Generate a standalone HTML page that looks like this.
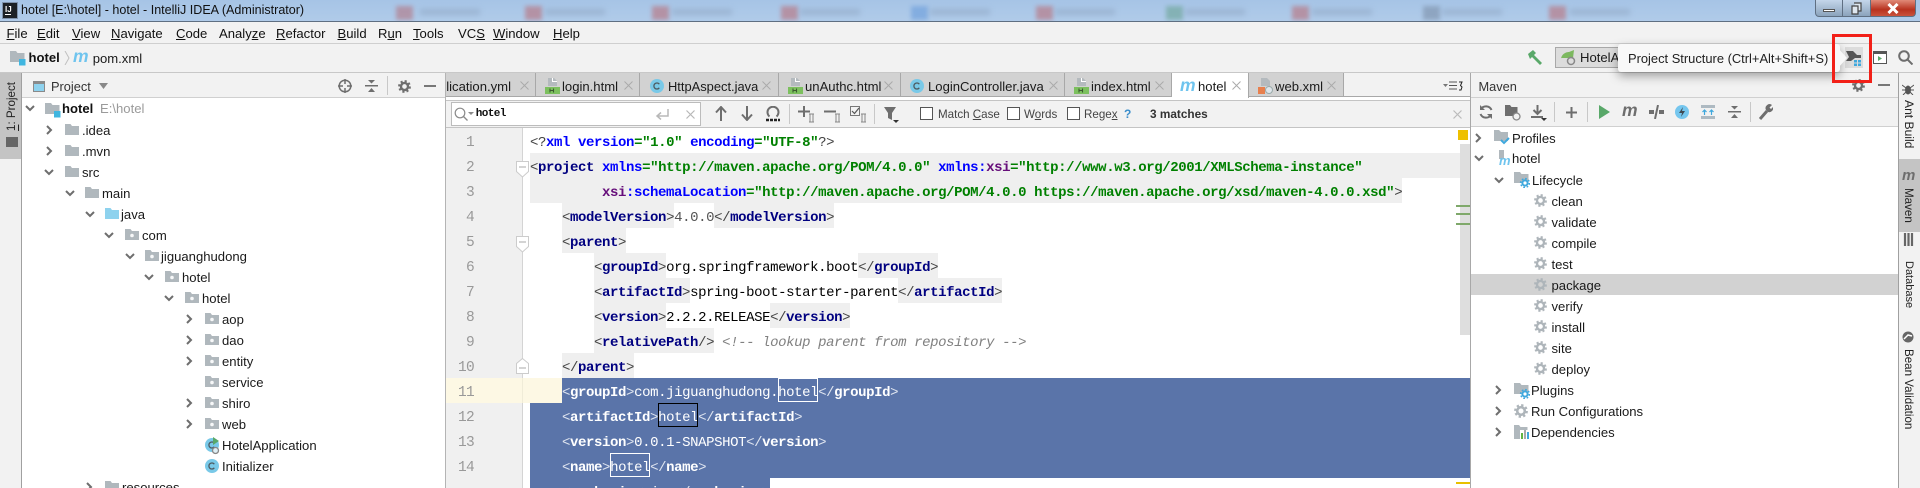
<!DOCTYPE html>
<html><head><meta charset="utf-8"><title>hotel</title>
<style>
html,body{margin:0;padding:0;background:#fff}
#r{position:relative;width:1920px;height:488px;overflow:hidden;background:#fff;font-family:"Liberation Sans",sans-serif;font-size:13.1px;color:#1a1a1a}
#r div,#r svg{position:absolute}
.t{white-space:pre;line-height:21px;height:21px}
.b{background:#f2f2f2}
.tab{top:73px;height:23px;background:#d2d2d2;border-right:1px solid #a8a8a8}
.l{left:530px;height:25px;line-height:30px;white-space:pre;font-family:"Liberation Mono",monospace;font-size:14px;letter-spacing:-.4px;color:#000;width:930px}
.l span{display:inline-block;height:25px;vertical-align:top}
.g{background:#efefef}
.n{color:#000080;font-weight:bold}
.a{color:#0000ff;font-weight:bold}
.p{color:#660e7a;font-weight:bold}
.s{color:#008000;font-weight:bold}
.o{color:#444;font-weight:normal}
.c{color:#808080;font-style:italic}
.w{color:#fff}
.w b{font-weight:bold}
.w i{font-style:normal;color:#dfe5f0}
.ln{left:445px;width:29px;text-align:right;height:25px;line-height:30px;font-family:"Liberation Mono",monospace;font-size:14.5px;letter-spacing:-.7px;color:#999}
.m{font-weight:bold;font-style:italic;color:#6fc4ee;font-family:"Liberation Sans",sans-serif;font-size:17.5px;line-height:21px;height:21px}
.v{writing-mode:vertical-rl;white-space:pre;line-height:21px;width:21px;font-size:11.6px;color:#222}
.mk{width:40px;height:24px;box-sizing:border-box;border:1px solid #fff;top:0}
.sep{width:1px;background:#c8c8c8}
.blur{filter:blur(2px);top:6px;height:14px;width:17px;background:#b87682;opacity:.65}
.fl{font-size:11.6px;color:#444}
</style></head><body><div id="r">
<svg width="0" height="0" style="left:0;top:0"><defs>
<symbol id="f" viewBox="0 0 14 11"><path d="M0 0h5.500l1.500 2h7v9H0z" fill="#b0b8bd"/></symbol>
<symbol id="fj" viewBox="0 0 14 11"><path d="M0 0h5.500l1.500 2h7v9H0z" fill="#8ed2ee"/></symbol>
<symbol id="p" viewBox="0 0 14 11"><path d="M0 0h5.500l1.500 2h7v9H0z" fill="#b0b8bd"/><circle cx="7" cy="6.500" r="1.800" fill="#fff" fill-opacity=".9"/></symbol>
<symbol id="cd" viewBox="0 0 10 10"><path d="M1 3l4 4 4-4" fill="none" stroke="#6e6e6e" stroke-width="2"/></symbol>
<symbol id="cr" viewBox="0 0 10 10"><path d="M3 1l4 4-4 4" fill="none" stroke="#6e6e6e" stroke-width="2"/></symbol>
<symbol id="root" viewBox="0 0 16 15"><path d="M0 0h6l1.500 2h7v9H0z" fill="#b0b8bd"/><path d="M9 8h6.500v6.500H9z" fill="#40b6e0"/></symbol>
<symbol id="cl" viewBox="0 0 14 14"><circle cx="7" cy="7" r="7" fill="#79c9e8"/><path d="M9.300 5.200A3 3 0 1 0 9.300 8.800" fill="none" stroke="#4d5a60" stroke-width="1.300"/></symbol>
<symbol id="html" viewBox="0 0 15 16"><path d="M3 0h6l3 3v5H3z" fill="#b4babe"/><path d="M7.500 0v3.500H12" fill="none" stroke="#fff"/><path d="M0 9h15v7H0z" fill="#7cc05e"/><path d="M5 10.500v4M8.500 10.500v4M5 12.500h3.500" stroke="#3c5a30" stroke-width="1.100" fill="none"/></symbol>
<symbol id="gear" viewBox="0 0 14 14"><circle cx="7" cy="7" r="3.800" fill="none" stroke="#aeb5ba" stroke-width="2.600"/><circle cx="7" cy="7" r="5.800" fill="none" stroke="#aeb5ba" stroke-width="2.200" stroke-dasharray="2.300 2.250"/></symbol>
<symbol id="gd" viewBox="0 0 14 14"><circle cx="7" cy="7" r="3.800" fill="none" stroke="#6e6e6e" stroke-width="2.600"/><circle cx="7" cy="7" r="5.800" fill="none" stroke="#6e6e6e" stroke-width="2.200" stroke-dasharray="2.300 2.250"/></symbol>
<symbol id="lf" viewBox="0 0 16 16"><path d="M0 0h6l1.500 2h7v9H0z" fill="#b0b8bd"/><circle cx="11" cy="11" r="2.600" fill="#fff" stroke="#3fa8dd" stroke-width="2"/><circle cx="11" cy="11" r="4.400" fill="none" stroke="#3fa8dd" stroke-width="1.500" stroke-dasharray="1.700 1.750"/></symbol>
</defs></svg>

<!-- title bar -->
<div style="left:0;top:0;width:1920px;height:21px;background:linear-gradient(#a6c4e6,#b0cbe9)"></div>
<div class="blur" style="left:396px;background:#b27b89"></div><div class="blur" style="left:525px"></div><div class="blur" style="left:652px"></div><div class="blur" style="left:781px"></div><div class="blur" style="left:911px;background:#6e9fdc"></div><div class="blur" style="left:1036px"></div><div class="blur" style="left:1166px;background:#6fa69a"></div><div class="blur" style="left:1292px"></div><div class="blur" style="left:1423px;background:#7f93ad"></div><div class="blur" style="left:1549px"></div>
<div style="left:420px;top:9px;width:60px;height:6px;background:#8fa7c4;filter:blur(3px);opacity:.6"></div><div style="left:545px;top:9px;width:60px;height:6px;background:#8fa7c4;filter:blur(3px);opacity:.6"></div><div style="left:672px;top:9px;width:60px;height:6px;background:#8fa7c4;filter:blur(3px);opacity:.6"></div><div style="left:800px;top:9px;width:60px;height:6px;background:#8fa7c4;filter:blur(3px);opacity:.6"></div><div style="left:930px;top:9px;width:60px;height:6px;background:#8fa7c4;filter:blur(3px);opacity:.6"></div><div style="left:1055px;top:9px;width:60px;height:6px;background:#8fa7c4;filter:blur(3px);opacity:.6"></div><div style="left:1185px;top:9px;width:60px;height:6px;background:#8fa7c4;filter:blur(3px);opacity:.6"></div><div style="left:1312px;top:9px;width:60px;height:6px;background:#8fa7c4;filter:blur(3px);opacity:.6"></div><div style="left:1442px;top:9px;width:60px;height:6px;background:#8fa7c4;filter:blur(3px);opacity:.6"></div><div style="left:1570px;top:9px;width:60px;height:6px;background:#8fa7c4;filter:blur(3px);opacity:.6"></div>
<div style="left:2px;top:2px;width:14px;height:15px;background:#1c2126;border:1px solid #7f93ad"></div>
<div class="t" style="left:5px;top:-1px;color:#fff;font-size:8px;font-weight:bold">IJ</div>
<div style="left:5px;top:14px;width:6px;height:1px;background:#fff"></div>
<div class="t" style="left:21px;top:0;color:#111;font-size:12.55px">hotel [E:\hotel] - hotel - IntelliJ IDEA (Administrator)</div>
<div style="left:0;top:21px;width:1920px;height:1px;background:#5f6f82"></div>
<!-- window buttons -->
<div style="left:1815px;top:0;width:28px;height:17px;background:linear-gradient(#c4d6ea,#8ba3bc);border:1px solid #5f6f82;border-top:0;box-sizing:border-box;border-radius:0 0 0 4px"></div>
<div style="left:1823px;top:9px;width:12px;height:3px;background:#fff;border:1px solid #555;box-sizing:border-box"></div>
<div style="left:1843px;top:0;width:27px;height:17px;background:linear-gradient(#c4d6ea,#8ba3bc);border-bottom:1px solid #5f6f82;box-sizing:border-box"></div>
<svg style="left:1850px;top:2px" width="13" height="13" viewBox="0 0 13 13"><path d="M4 1h7v8H8M2 4h6v8H2z" fill="#dfe7ef" stroke="#444" stroke-width="1.200"/></svg>
<div style="left:1870px;top:0;width:46px;height:17px;background:linear-gradient(#e08a78,#b8321f 60%,#c9523c);border:1px solid #5f6f82;border-top:0;box-sizing:border-box;border-radius:0 0 4px 0"></div>
<svg style="left:1887px;top:3px" width="12" height="11" viewBox="0 0 12 11"><path d="M1.500 1l9 9M10.500 1l-9 9" stroke="#fff" stroke-width="3"/></svg>

<!-- menu -->
<div class="b" style="left:0;top:22px;width:1920px;height:21px"></div>
<div style="left:0;top:43px;width:1920px;height:1px;background:#cfcfcf"></div>
<div class="t" style="left:6.500px;top:22.500px;color:#111"><u>F</u>ile</div>
<div class="t" style="left:37px;top:22.500px;color:#111"><u>E</u>dit</div>
<div class="t" style="left:72px;top:22.500px;color:#111"><u>V</u>iew</div>
<div class="t" style="left:111px;top:22.500px;color:#111"><u>N</u>avigate</div>
<div class="t" style="left:176px;top:22.500px;color:#111"><u>C</u>ode</div>
<div class="t" style="left:219px;top:22.500px;color:#111">Analy<u>z</u>e</div>
<div class="t" style="left:276px;top:22.500px;color:#111"><u>R</u>efactor</div>
<div class="t" style="left:337.500px;top:22.500px;color:#111"><u>B</u>uild</div>
<div class="t" style="left:378px;top:22.500px;color:#111">R<u>u</u>n</div>
<div class="t" style="left:413px;top:22.500px;color:#111"><u>T</u>ools</div>
<div class="t" style="left:458px;top:22.500px;color:#111">VC<u>S</u></div>
<div class="t" style="left:493px;top:22.500px;color:#111"><u>W</u>indow</div>
<div class="t" style="left:553px;top:22.500px;color:#111"><u>H</u>elp</div>

<!-- nav bar -->
<div class="b" style="left:0;top:44px;width:1920px;height:28px"></div>
<div style="left:0;top:72px;width:1920px;height:1px;background:#c8c8c8"></div>
<svg style="left:10px;top:51px" width="16" height="15"><use href="#root"/></svg>
<div class="t" style="left:28.500px;top:47px;font-weight:bold;color:#111">hotel</div>
<svg style="left:64px;top:51px" width="6" height="14" viewBox="0 0 6 14"><path d="M1 0l4 7-4 7" fill="none" stroke="#c0c0c0"/></svg>
<div class="m" style="left:73px;top:46px">m</div>
<div class="t" style="left:92.700px;top:47.500px">pom.xml</div>
<svg style="left:1526px;top:49px" width="18" height="18" viewBox="0 0 18 18"><path d="M2 5l5-4 3 3-2 2 8 8-2 2-8-8-2 2z" fill="#59a869"/></svg>
<div style="left:1555px;top:47px;width:70px;height:21px;background:#dcdcdc;border:1px solid #a8a8a8;box-sizing:border-box"></div>
<svg style="left:1560px;top:49px" width="16" height="17" viewBox="0 0 16 17"><path d="M1 11C1 5 6 3 9 3l5-2-1 8H1z" fill="#7cb85f"/><circle cx="11" cy="12" r="3.500" fill="#dcdcdc" stroke="#888" stroke-width="1.500"/></svg>
<div class="t" style="left:1580px;top:47px">HotelA</div>

<!-- left strip -->
<div class="b" style="left:0;top:73px;width:21px;height:415px"></div>
<div style="left:0;top:73px;width:21px;height:86px;background:#c4c4c4"></div>
<div style="left:21px;top:73px;width:1px;height:415px;background:#a0a0a0"></div>
<div class="v" style="left:1px;top:82px;transform:rotate(180deg)"><u>1</u>: Project</div>
<svg style="left:6px;top:137px" width="12" height="10"><rect width="12" height="10" fill="#666"/></svg>

<!-- project header -->
<div class="b" style="left:22px;top:73px;width:423px;height:24px"></div>
<div style="left:22px;top:97px;width:423px;height:1px;background:#d0d0d0"></div>
<div style="left:33px;top:81px;width:12px;height:11px;background:#8ed2ee;border:1px solid #8a8a8a;border-top-width:3px;box-sizing:border-box"></div>
<div class="t" style="left:51px;top:75.500px;color:#333;font-size:12.8px">Project</div>
<svg style="left:99px;top:83px" width="9" height="6"><path d="M0 0h9L4.500 6z" fill="#888"/></svg>
<svg style="left:338px;top:79px" width="14" height="14" viewBox="0 0 14 14"><circle cx="7" cy="7" r="5.800" fill="none" stroke="#6e6e6e" stroke-width="1.500"/><path d="M7 0v5M7 9v5M0 7h5M9 7h5" stroke="#6e6e6e" stroke-width="1.500"/></svg>
<svg style="left:365px;top:79px" width="13" height="14" viewBox="0 0 13 14"><path d="M0 6h13v1.500H0zM3 1l3.500 3.500L10 1zM3 13l3.500-4 3.500 4z" fill="#6e6e6e"/></svg>
<div class="sep" style="left:387px;top:76px;height:19px"></div>
<svg style="left:398px;top:80px" width="13" height="13"><use href="#gd"/></svg>
<div style="left:424px;top:85px;width:12px;height:2px;background:#777"></div>

<!-- project tree -->
<svg style="left:25px;top:103px" width="10" height="10"><use href="#cd"/></svg>
<svg style="left:45px;top:103px" width="16" height="15"><use href="#root"/></svg>
<div class="t" style="left:62px;top:98px;font-weight:bold;color:#111">hotel</div><div class="t" style="left:100px;top:98px;color:#9a9a9a">E:\hotel</div>
<svg style="left:44px;top:125px" width="10" height="10"><use href="#cr"/></svg><svg style="left:65px;top:124px" width="14" height="11"><use href="#f"/></svg><div class="t" style="left:82px;top:119.500px">.idea</div>
<svg style="left:44px;top:146px" width="10" height="10"><use href="#cr"/></svg><svg style="left:65px;top:145px" width="14" height="11"><use href="#f"/></svg><div class="t" style="left:82px;top:140.500px">.mvn</div>
<svg style="left:44px;top:167px" width="10" height="10"><use href="#cd"/></svg><svg style="left:65px;top:166px" width="14" height="11"><use href="#f"/></svg><div class="t" style="left:82px;top:161.500px">src</div>
<svg style="left:65px;top:188px" width="10" height="10"><use href="#cd"/></svg><svg style="left:85px;top:187px" width="14" height="11"><use href="#f"/></svg><div class="t" style="left:102px;top:182.500px">main</div>
<svg style="left:85px;top:209px" width="10" height="10"><use href="#cd"/></svg><svg style="left:105px;top:208px" width="14" height="11"><use href="#fj"/></svg><div class="t" style="left:121px;top:203.500px">java</div>
<svg style="left:104px;top:230px" width="10" height="10"><use href="#cd"/></svg><svg style="left:125px;top:229px" width="14" height="11"><use href="#p"/></svg><div class="t" style="left:142px;top:224.500px">com</div>
<svg style="left:125px;top:251px" width="10" height="10"><use href="#cd"/></svg><svg style="left:145px;top:250px" width="14" height="11"><use href="#p"/></svg><div class="t" style="left:161px;top:245.500px">jiguanghudong</div>
<svg style="left:144px;top:272px" width="10" height="10"><use href="#cd"/></svg><svg style="left:165px;top:271px" width="14" height="11"><use href="#p"/></svg><div class="t" style="left:182px;top:266.500px">hotel</div>
<svg style="left:164px;top:293px" width="10" height="10"><use href="#cd"/></svg><svg style="left:185px;top:292px" width="14" height="11"><use href="#p"/></svg><div class="t" style="left:202px;top:287.500px">hotel</div>
<svg style="left:184px;top:314px" width="10" height="10"><use href="#cr"/></svg><svg style="left:205px;top:313px" width="14" height="11"><use href="#p"/></svg><div class="t" style="left:222px;top:308.500px">aop</div>
<svg style="left:184px;top:335px" width="10" height="10"><use href="#cr"/></svg><svg style="left:205px;top:334px" width="14" height="11"><use href="#p"/></svg><div class="t" style="left:222px;top:329.500px">dao</div>
<svg style="left:184px;top:356px" width="10" height="10"><use href="#cr"/></svg><svg style="left:205px;top:355px" width="14" height="11"><use href="#p"/></svg><div class="t" style="left:222px;top:350.500px">entity</div>
<svg style="left:205px;top:376px" width="14" height="11"><use href="#p"/></svg><div class="t" style="left:222px;top:371.500px">service</div>
<svg style="left:184px;top:398px" width="10" height="10"><use href="#cr"/></svg><svg style="left:205px;top:397px" width="14" height="11"><use href="#p"/></svg><div class="t" style="left:222px;top:392.500px">shiro</div>
<svg style="left:184px;top:419px" width="10" height="10"><use href="#cr"/></svg><svg style="left:205px;top:418px" width="14" height="11"><use href="#p"/></svg><div class="t" style="left:222px;top:413.500px">web</div>
<svg style="left:205px;top:438px" width="14" height="14"><use href="#cl"/></svg><svg style="left:212px;top:437px" width="9" height="9" viewBox="0 0 9 9"><path d="M1 0l6 4-6 4z" fill="#59a869"/></svg><svg style="left:211px;top:446px" width="9" height="9" viewBox="0 0 9 9"><circle cx="4.500" cy="4.500" r="3" fill="#dfeff5" stroke="#888" stroke-width="1.300"/></svg><div class="t" style="left:222px;top:434.500px">HotelApplication</div>
<svg style="left:205px;top:459px" width="14" height="14"><use href="#cl"/></svg><div class="t" style="left:222px;top:455.500px">Initializer</div>
<svg style="left:84px;top:482px" width="10" height="10"><use href="#cr"/></svg><svg style="left:105px;top:481px" width="14" height="11"><use href="#f"/></svg><div class="t" style="left:122px;top:476.500px">resources</div>
<div style="left:445px;top:73px;width:1px;height:415px;background:#b4b4b4"></div>

<!-- tabs -->
<div class="b" style="left:446px;top:73px;width:1024px;height:24px"></div>
<div class="tab" style="left:446px;width:89px"></div>
<div class="tab" style="left:536px;width:103px"></div>
<div class="tab" style="left:640px;width:138px"></div>
<div class="tab" style="left:779px;width:121px"></div>
<div class="tab" style="left:901px;width:163px"></div>
<div class="tab" style="left:1065px;width:106px"></div>
<div style="left:1172px;top:73px;width:76px;height:25px;background:#fff;border-right:1px solid #a8a8a8"></div>
<div class="tab" style="left:1249px;width:94px"></div>
<div style="left:446px;top:96px;width:726px;height:1px;background:#a8a8a8"></div>
<div style="left:1249px;top:96px;width:221px;height:1px;background:#a8a8a8"></div>
<div style="left:446px;top:100px;width:1024px;height:1px;background:#c4c4c4"></div>
<div class="t" style="left:446px;top:75.500px;width:65px;overflow:hidden;direction:rtl">application.yml</div>
<svg style="left:520px;top:81px" width="9" height="9"><path d="M.5.500l8 8M8.500.500l-8 8" stroke="#aaa"/></svg>
<svg style="left:545px;top:78px" width="15" height="16"><use href="#html"/></svg><div class="t" style="left:562px;top:75.500px">login.html</div>
<svg style="left:624px;top:81px" width="9" height="9"><path d="M.5.500l8 8M8.500.500l-8 8" stroke="#aaa"/></svg>
<svg style="left:650px;top:79px" width="14" height="14"><use href="#cl"/></svg><div class="t" style="left:668px;top:75.500px;font-size:12.9px">HttpAspect.java</div>
<svg style="left:762px;top:81px" width="9" height="9"><path d="M.5.500l8 8M8.500.500l-8 8" stroke="#aaa"/></svg>
<svg style="left:788px;top:78px" width="15" height="16"><use href="#html"/></svg><div class="t" style="left:805px;top:75.500px">unAuthc.html</div>
<svg style="left:884px;top:81px" width="9" height="9"><path d="M.5.500l8 8M8.500.500l-8 8" stroke="#aaa"/></svg>
<svg style="left:910px;top:79px" width="14" height="14"><use href="#cl"/></svg><div class="t" style="left:928px;top:75.500px">LoginController.java</div>
<svg style="left:1049px;top:81px" width="9" height="9"><path d="M.5.500l8 8M8.500.500l-8 8" stroke="#aaa"/></svg>
<svg style="left:1074px;top:78px" width="15" height="16"><use href="#html"/></svg><div class="t" style="left:1091px;top:75.500px">index.html</div>
<svg style="left:1155px;top:81px" width="9" height="9"><path d="M.5.500l8 8M8.500.500l-8 8" stroke="#aaa"/></svg>
<div class="m" style="left:1180px;top:75px">m</div><div class="t" style="left:1198px;top:75.500px">hotel</div>
<svg style="left:1232px;top:81px" width="9" height="9"><path d="M.5.500l8 8M8.500.500l-8 8" stroke="#aaa"/></svg>
<svg style="left:1258px;top:78px" width="15" height="16" viewBox="0 0 15 16"><path d="M3 0h6l3 3v5H3z" fill="#b4babe"/><path d="M0 9h7v7H0z" fill="#e8804e"/><circle cx="11" cy="12" r="3.500" fill="#dfe5ea" stroke="#9aa" /></svg><div class="t" style="left:1275px;top:75.500px">web.xml</div>
<svg style="left:1327px;top:81px" width="9" height="9"><path d="M.5.500l8 8M8.500.500l-8 8" stroke="#aaa"/></svg>
<svg style="left:1443px;top:81px" width="20" height="10" viewBox="0 0 20 10"><path d="M0 3h5L2.500 6z" fill="#777"/><path d="M6 1h8M6 4.500h8M6 8h8" stroke="#555"/><path d="M16 1h3l-1.500 3.500 1.500 1.500-1 3h-2" fill="none" stroke="#222"/></svg>

<!-- find bar -->
<div class="b" style="left:446px;top:101px;width:1024px;height:26px"></div>
<div style="left:446px;top:127px;width:1024px;height:1px;background:#c4c4c4"></div>
<div style="left:451px;top:102px;width:250px;height:24px;background:#fff;border:1px solid #bcbcbc;box-sizing:border-box"></div>
<svg style="left:454px;top:107px" width="20" height="15" viewBox="0 0 20 15"><circle cx="6" cy="6" r="4.800" fill="none" stroke="#8a8a8a" stroke-width="1.200"/><path d="M9.500 9.500l4 4" stroke="#8a8a8a" stroke-width="1.300"/><path d="M14 5h6l-3 3z" fill="#8a8a8a"/></svg>
<div class="t" style="left:475.700px;top:103.500px;font-family:'Liberation Mono',monospace;font-size:11px;letter-spacing:-.6px;font-weight:bold;color:#111">hotel</div>
<svg style="left:655px;top:109px" width="14" height="11" viewBox="0 0 14 11"><path d="M13 0v7H3M6 3.500L2 7l4 3.500" fill="none" stroke="#b8b8b8" stroke-width="1.500"/></svg>
<svg style="left:686px;top:110px" width="9" height="9"><path d="M.5.500l8 8M8.500.500l-8 8" stroke="#b8b8b8" stroke-width="1.200"/></svg>
<svg style="left:715px;top:106px" width="12" height="15" viewBox="0 0 12 15"><path d="M6 15V1M1 6.500L6 1l5 5.500" fill="none" stroke="#6e6e6e" stroke-width="2"/></svg>
<svg style="left:741px;top:106px" width="12" height="15" viewBox="0 0 12 15"><path d="M6 0v14M1 8.500L6 14l5-5.500" fill="none" stroke="#6e6e6e" stroke-width="2"/></svg>
<svg style="left:765px;top:106px" width="16" height="16" viewBox="0 0 16 16"><path d="M4.500 10.500A5.500 5.500 0 1 1 11.500 10.500" fill="none" stroke="#6e6e6e" stroke-width="2"/><path d="M1 14h14" stroke="#222" stroke-width="2.500" stroke-dasharray="3 1"/></svg>
<div class="sep" style="left:789px;top:104px;height:20px"></div>
<svg style="left:798px;top:106px" width="18" height="17" viewBox="0 0 18 17"><path d="M6 0v11M0 5.500h12" stroke="#6e6e6e" stroke-width="2" fill="none"/><path d="M12 8v8M15 8v8M11 8h5M11 16h5" stroke="#888" fill="none"/></svg>
<svg style="left:824px;top:106px" width="18" height="17" viewBox="0 0 18 17"><path d="M0 5.500h12" stroke="#6e6e6e" stroke-width="2" fill="none"/><path d="M12 8v8M15 8v8M11 8h5M11 16h5" stroke="#888" fill="none"/></svg>
<svg style="left:850px;top:106px" width="18" height="17" viewBox="0 0 18 17"><path d="M.5.500h9v9h-9z" fill="none" stroke="#777"/><path d="M2 5l2.500 2.500L9 2" fill="none" stroke="#555" stroke-width="1.200"/><path d="M12 8v8M15 8v8M11 8h5M11 16h5" stroke="#888" fill="none"/></svg>
<div class="sep" style="left:874px;top:104px;height:20px"></div>
<svg style="left:884px;top:107px" width="15" height="17" viewBox="0 0 15 17"><path d="M0 0h12L8 6v7L4 11V6z" fill="#6e6e6e"/><path d="M9 13h6l-3 3z" fill="#333"/></svg>
<div style="left:920px;top:107px;width:13px;height:13px;background:#fff;border:1px solid #555;box-sizing:border-box"></div>
<div class="t fl" style="left:938px;top:103.500px">Match <u>C</u>ase</div>
<div style="left:1007px;top:107px;width:13px;height:13px;background:#fff;border:1px solid #555;box-sizing:border-box"></div>
<div class="t fl" style="left:1024px;top:103.500px">W<u>o</u>rds</div>
<div style="left:1067px;top:107px;width:13px;height:13px;background:#fff;border:1px solid #555;box-sizing:border-box"></div>
<div class="t fl" style="left:1084px;top:103.500px">Rege<u>x</u></div>
<div class="t" style="left:1124px;top:103.500px;color:#3b8ecb;font-weight:bold;font-size:12px">?</div>
<div class="t" style="left:1150px;top:104px;color:#333;font-weight:bold;font-size:11.8px">3 matches</div>
<svg style="left:1453px;top:110px" width="9" height="9"><path d="M.5.500l8 8M8.500.500l-8 8" stroke="#bbb" stroke-width="1.200"/></svg>

<!-- gutter -->
<div style="left:446px;top:128px;width:76px;height:360px;background:#f0f0f0"></div>
<div style="left:522px;top:128px;width:1px;height:360px;background:#d4d4d4"></div>
<div style="left:446px;top:378px;width:116px;height:25px;background:#fdf8e4"></div>
<div style="left:522px;top:378px;width:1px;height:25px;background:#f0ecd8"></div>
<div class="ln" style="top:128px">1</div><div class="ln" style="top:153px">2</div><div class="ln" style="top:178px">3</div><div class="ln" style="top:203px">4</div><div class="ln" style="top:228px">5</div><div class="ln" style="top:253px">6</div><div class="ln" style="top:278px">7</div><div class="ln" style="top:303px">8</div><div class="ln" style="top:328px">9</div><div class="ln" style="top:353px">10</div><div class="ln" style="top:378px">11</div><div class="ln" style="top:403px">12</div><div class="ln" style="top:428px">13</div><div class="ln" style="top:453px">14</div>

<!-- selection and bands -->
<div style="left:530px;top:153px;width:940px;height:25px;background:#efefef"></div>
<div style="left:562px;top:378px;width:908px;height:25px;background:#5a74a9"></div>
<div style="left:530px;top:403px;width:940px;height:75px;background:#5a74a9"></div>
<div style="left:530px;top:478px;width:240px;height:10px;background:#5a74a9"></div>

<!-- code -->
<div class="l" style="top:128px;left:530px"><span class="o">&lt;?</span><span class="a">xml</span> <span class="a">version</span><span class="s">="1.0"</span> <span class="a">encoding</span><span class="s">="UTF-8"</span><span class="o">?&gt;</span></div>
<div class="l" style="top:153px;width:940px"><span class="o">&lt;</span><span class="n">project</span> <span class="a">xmlns</span><span class="s">="http://maven.apache.org/POM/4.0.0"</span> <span class="a">xmlns:</span><span class="p">xsi</span><span class="s">="http://www.w3.org/2001/XMLSchema-instance"</span></div>
<div class="l" style="top:178px"><span class="g">         <span class="p">xsi</span><span class="a">:schemaLocation</span><span class="s">="http://maven.apache.org/POM/4.0.0 https://maven.apache.org/xsd/maven-4.0.0.xsd"</span><span class="o">&gt;</span></span></div>
<div class="l" style="top:203px">    <span class="g"><span class="o">&lt;</span><span class="n">modelVersion</span><span class="o">&gt;</span></span><span style="color:#555">4.0.0</span><span class="g"><span class="o">&lt;/</span><span class="n">modelVersion</span><span class="o">&gt;</span></span></div>
<div class="l" style="top:228px">    <span class="g"><span class="o">&lt;</span><span class="n">parent</span><span class="o">&gt;</span></span></div>
<div class="l" style="top:253px">        <span class="g"><span class="o">&lt;</span><span class="n">groupId</span><span class="o">&gt;</span></span>org.springframework.boot<span class="g"><span class="o">&lt;/</span><span class="n">groupId</span><span class="o">&gt;</span></span></div>
<div class="l" style="top:278px">        <span class="g"><span class="o">&lt;</span><span class="n">artifactId</span><span class="o">&gt;</span></span>spring-boot-starter-parent<span class="g"><span class="o">&lt;/</span><span class="n">artifactId</span><span class="o">&gt;</span></span></div>
<div class="l" style="top:303px">        <span class="g"><span class="o">&lt;</span><span class="n">version</span><span class="o">&gt;</span></span>2.2.2.RELEASE<span class="g"><span class="o">&lt;/</span><span class="n">version</span><span class="o">&gt;</span></span></div>
<div class="l" style="top:328px">        <span class="g"><span class="o">&lt;</span><span class="n">relativePath</span><span class="o">/&gt;</span></span> <span class="c">&lt;!-- lookup parent from repository --&gt;</span></div>
<div class="l" style="top:353px">    <span class="g"><span class="o">&lt;/</span><span class="n">parent</span><span class="o">&gt;</span></span></div>
<div class="l w" style="top:378px">    <i>&lt;</i><b>groupId</b><i>&gt;</i>com.jiguanghudong.hotel<i>&lt;/</i><b>groupId</b><i>&gt;</i></div>
<div class="l w" style="top:403px">    <i>&lt;</i><b>artifactId</b><i>&gt;</i>hotel<i>&lt;/</i><b>artifactId</b><i>&gt;</i></div>
<div class="l w" style="top:428px">    <i>&lt;</i><b>version</b><i>&gt;</i>0.0.1-SNAPSHOT<i>&lt;/</i><b>version</b><i>&gt;</i></div>
<div class="l w" style="top:453px">    <i>&lt;</i><b>name</b><i>&gt;</i>hotel<i>&lt;/</i><b>name</b><i>&gt;</i></div>
<div class="l w" style="top:478px">    <i>&lt;</i><b>packaging</b><i>&gt;</i>jar<i>&lt;/</i><b>packaging</b><i>&gt;</i></div>
<div class="mk" style="left:778px;top:378px"></div>
<div class="mk" style="left:658px;top:403px;border-color:#000"></div>
<div class="mk" style="left:610px;top:453px"></div>

<!-- fold markers -->
<svg style="left:516px;top:161px" width="14" height="17" viewBox="0 0 14 17"><path d="M.5.500h12v10l-6 5.500-6-5.500z" fill="#fff" stroke="#ccc"/><path d="M3 6h7" stroke="#aaa"/></svg>
<svg style="left:516px;top:236px" width="14" height="17" viewBox="0 0 14 17"><path d="M.5.500h12v10l-6 5.500-6-5.500z" fill="#fff" stroke="#ccc"/><path d="M3 6h7" stroke="#aaa"/></svg>
<svg style="left:516px;top:358px" width="14" height="16" viewBox="0 0 14 16"><path d="M.5 15.500h12v-10l-6-5-6 5z" fill="#fff" stroke="#ccc"/><path d="M3 10h7" stroke="#aaa"/></svg>

<!-- scrollbar & markers -->
<div style="left:1460px;top:144px;width:10px;height:191px;background:#dedede"></div>
<div style="left:1458px;top:130px;width:10px;height:10px;background:#eec000"></div>
<div style="left:1456px;top:205px;width:14px;height:2px;background:#7fa86a"></div>
<div style="left:1456px;top:213px;width:14px;height:2px;background:#7fa86a"></div>
<div style="left:1456px;top:223px;width:14px;height:2px;background:#7fa86a"></div>
<div style="left:1456px;top:482px;width:14px;height:2px;background:#e8c000"></div>

<!-- maven -->
<div style="left:1470px;top:73px;width:1px;height:415px;background:#a8a8a8"></div>
<div class="b" style="left:1471px;top:73px;width:427px;height:53px"></div>
<div style="left:1471px;top:97px;width:427px;height:1px;background:#d0d0d0"></div>
<div style="left:1471px;top:126px;width:427px;height:1px;background:#d0d0d0"></div>
<div class="t" style="left:1478.500px;top:75.500px;color:#333;font-size:12.8px">Maven</div>
<svg style="left:1852px;top:79px" width="13" height="13"><use href="#gd"/></svg>
<div style="left:1878px;top:84px;width:12px;height:2px;background:#777"></div>
<svg style="left:1479px;top:105px" width="14" height="14" viewBox="0 0 14 14"><path d="M12.500 5A6 6 0 0 0 2 4M1.500 9A6 6 0 0 0 12 10" fill="none" stroke="#6e6e6e" stroke-width="2"/><path d="M1 0v5h5zM13 14V9H8z" fill="#6e6e6e"/></svg>
<svg style="left:1505px;top:105px" width="16" height="16" viewBox="0 0 16 16"><path d="M0 0h5l1.500 2h6v9H0z" fill="#6e6e6e"/><circle cx="11.500" cy="11.500" r="3.500" fill="#f2f2f2" stroke="#888" stroke-width="1.300"/></svg>
<svg style="left:1531px;top:105px" width="16" height="16" viewBox="0 0 16 16"><path d="M6.500 0v8M2.500 5l4 4 4-4" fill="none" stroke="#6e6e6e" stroke-width="2"/><path d="M0 12h12" stroke="#6e6e6e" stroke-width="2"/><path d="M10 13h6l-3 3z" fill="#333"/></svg>
<div class="sep" style="left:1554px;top:102px;height:20px"></div>
<svg style="left:1566px;top:107px" width="11" height="11"><path d="M5.500 0v11M0 5.500h11" stroke="#6e6e6e" stroke-width="2"/></svg>
<div class="sep" style="left:1587px;top:102px;height:20px"></div>
<svg style="left:1599px;top:105px" width="11" height="14"><path d="M0 0l11 7-11 7z" fill="#59a869"/></svg>
<div class="m" style="left:1622px;top:100px;color:#6e6e6e">m</div>
<svg style="left:1649px;top:105px" width="15" height="14" viewBox="0 0 15 14"><path d="M0 5h5v4H0zM10 5h5v4h-5z" fill="#6e6e6e"/><path d="M9 0L6 14" stroke="#6e6e6e" stroke-width="2" fill="none"/></svg>
<svg style="left:1675px;top:105px" width="14" height="14" viewBox="0 0 14 14"><circle cx="7" cy="7" r="7" fill="#75c6ee"/><path d="M8 2L4 8h3l-1 4 4-6H7z" fill="#3f4a52"/></svg>
<svg style="left:1701px;top:105px" width="14" height="14" viewBox="0 0 14 14"><path d="M0 0h14v3H0zM0 11h14v3H0z" fill="#aebac2"/><path d="M3.500 10V5M1.500 7l2-2 2 2M10.500 10V5M8.500 7l2-2 2 2" fill="none" stroke="#3fa8dd" stroke-width="1.200"/></svg>
<svg style="left:1728px;top:105px" width="13" height="14"><path d="M0 6h13v1.500H0zM3 1l3.500 3.500L10 1zM3 13l3.500-4 3.500 4z" fill="#6e6e6e"/></svg>
<div class="sep" style="left:1750px;top:102px;height:20px"></div>
<svg style="left:1759px;top:104px" width="14" height="16" viewBox="0 0 14 16"><path d="M1 15l7-8" stroke="#6e6e6e" stroke-width="3"/><path d="M7 6a4 4 0 0 1 6-5l-2.500 2.500 1.500 1.500L14 3a4 4 0 0 1-5 5z" fill="#6e6e6e"/></svg>

<svg style="left:1473px;top:133px" width="10" height="10"><use href="#cr"/></svg>
<svg style="left:1494px;top:130px" width="17" height="17" viewBox="0 0 17 17"><path d="M0 0h5l2 2h7v9H0z" fill="#b0b8bd"/><path d="M7 10l3 3 5-5" fill="none" stroke="#3fa8dd" stroke-width="2"/></svg>
<div class="t" style="left:1512px;top:127.500px">Profiles</div>
<svg style="left:1474px;top:153px" width="10" height="10"><use href="#cd"/></svg>
<svg style="left:1497px;top:150px" width="14" height="16" viewBox="0 0 14 16"><path d="M2 0h5v9H2z" fill="#b0b8bd"/></svg><div class="m" style="left:1499px;top:153px;font-size:13px;line-height:15px;height:15px">m</div>
<div class="t" style="left:1512px;top:148px">hotel</div>
<svg style="left:1494px;top:175px" width="10" height="10"><use href="#cd"/></svg>
<svg style="left:1514px;top:172px" width="16" height="16"><use href="#lf"/></svg><div class="t" style="left:1532px;top:169.500px">Lifecycle</div>
<div style="left:1471px;top:274px;width:427px;height:21px;background:#d2d2d2"></div>
<svg style="left:1534px;top:194px" width="13" height="13"><use href="#gear"/></svg><div class="t" style="left:1551.500px;top:190.500px">clean</div>
<svg style="left:1534px;top:215px" width="13" height="13"><use href="#gear"/></svg><div class="t" style="left:1551.500px;top:211.500px">validate</div>
<svg style="left:1534px;top:236px" width="13" height="13"><use href="#gear"/></svg><div class="t" style="left:1551.500px;top:232.500px">compile</div>
<svg style="left:1534px;top:257px" width="13" height="13"><use href="#gear"/></svg><div class="t" style="left:1551.500px;top:253.500px">test</div>
<svg style="left:1534px;top:278px" width="13" height="13"><use href="#gear"/></svg><div class="t" style="left:1551.500px;top:274.500px">package</div>
<svg style="left:1534px;top:299px" width="13" height="13"><use href="#gear"/></svg><div class="t" style="left:1551.500px;top:295.500px">verify</div>
<svg style="left:1534px;top:320px" width="13" height="13"><use href="#gear"/></svg><div class="t" style="left:1551.500px;top:316.500px">install</div>
<svg style="left:1534px;top:341px" width="13" height="13"><use href="#gear"/></svg><div class="t" style="left:1551.500px;top:337.500px">site</div>
<svg style="left:1534px;top:362px" width="13" height="13"><use href="#gear"/></svg><div class="t" style="left:1551.500px;top:358.500px">deploy</div>
<svg style="left:1493px;top:385px" width="10" height="10"><use href="#cr"/></svg><svg style="left:1514px;top:383px" width="16" height="16"><use href="#lf"/></svg><div class="t" style="left:1531px;top:379.500px">Plugins</div>
<svg style="left:1493px;top:406px" width="10" height="10"><use href="#cr"/></svg><svg style="left:1514px;top:404px" width="14" height="14"><use href="#gear"/></svg><div class="t" style="left:1531px;top:400.500px">Run Configurations</div>
<svg style="left:1493px;top:427px" width="10" height="10"><use href="#cr"/></svg><svg style="left:1514px;top:425px" width="16" height="15" viewBox="0 0 16 15"><path d="M0 0h5l1.500 2h7v3H6v9H0z" fill="#b0b8bd"/><path d="M7 8h2v6H7z" fill="#62b543"/><path d="M10 5h2v9h-2z" fill="#aaa"/><path d="M13 7h2v7h-2z" fill="#3fa8dd"/></svg><div class="t" style="left:1531px;top:421.500px">Dependencies</div>

<!-- right strip -->
<div class="b" style="left:1899px;top:73px;width:21px;height:415px"></div>
<div style="left:1898px;top:73px;width:1px;height:415px;background:#a0a0a0"></div>
<div style="left:1899px;top:159px;width:21px;height:73px;background:#c4c4c4"></div>
<svg style="left:1902px;top:83px" width="12" height="12" viewBox="0 0 12 12"><ellipse cx="6" cy="7" rx="3" ry="4.500" fill="#555"/><path d="M0 2l4 3M12 2L8 5M0 7h3M12 7H9M1 12l3-3M11 12L8 9" stroke="#555"/></svg>
<div class="v" style="left:1898px;top:100px;font-size:12.1px">Ant Build</div>
<div class="m" style="left:1902px;top:165px;color:#6e6e6e;font-size:15px">m</div>
<div class="v" style="left:1898px;top:188px">Maven</div>
<svg style="left:1903px;top:233px" width="11" height="13" viewBox="0 0 11 13"><path d="M2 0v13M5.500 0v13M9 0v13" stroke="#666" stroke-width="2.200"/></svg>
<div class="v" style="left:1898px;top:261px;font-size:11px">Database</div>
<svg style="left:1902px;top:331px" width="12" height="12" viewBox="0 0 12 12"><circle cx="6" cy="6" r="5.500" fill="#666"/><path d="M2 8l4-4 4 1" fill="none" stroke="#fff" stroke-width="1.500"/></svg>
<div class="v" style="left:1898px;top:349px">Bean Validation</div>

<!-- right nav icons -->
<div style="left:1845px;top:47px;width:18px;height:21px;background:#dcdcdc"></div>
<svg style="left:1846px;top:51px" width="16" height="15" viewBox="0 0 16 15"><path d="M0 0h7l4 4 4 0v3H9L5 10H0l3-4z" fill="#555"/><path d="M8 9h3v2.500H8zM12 9h3v2.500h-3zM8 12.500h3V15H8zM12 12.500h3V15h-3z" fill="#3fa8dd"/></svg>
<svg style="left:1873px;top:51px" width="14" height="13" viewBox="0 0 14 13"><path d="M.5.500h13v12H.5z" fill="#fff" stroke="#555"/><path d="M.5 1h13v2H.5z" fill="#555"/><path d="M5 5l4 2.500L5 10z" fill="#59a869"/></svg>
<svg style="left:1898px;top:50px" width="15" height="15" viewBox="0 0 15 15"><circle cx="6" cy="6" r="4.800" fill="none" stroke="#6e6e6e" stroke-width="2"/><path d="M9.500 9.500l5 5" stroke="#6e6e6e" stroke-width="2"/></svg>

<!-- tooltip -->
<div style="left:1618px;top:44px;width:222px;height:28px;background:#f8f8f8;border-radius:3px;box-shadow:0 4px 10px rgba(0,0,0,.35)"></div>
<svg style="left:1838px;top:48px" width="10" height="20" viewBox="0 0 10 20"><path d="M0 0l9 10-9 10z" fill="#f8f8f8"/></svg>
<div class="t" style="left:1628px;top:47.500px;color:#222;font-size:12.9px">Project Structure (Ctrl+Alt+Shift+S)</div>
<!-- red box -->
<div style="left:1832px;top:34px;width:40px;height:49px;border:3px solid #f22018;box-sizing:border-box"></div>
</div></body></html>
